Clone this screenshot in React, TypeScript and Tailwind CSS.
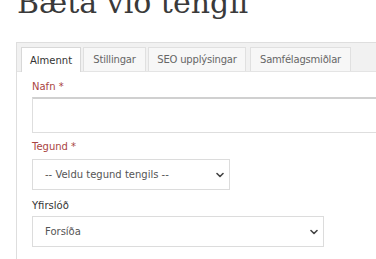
import React from "react";

function Chevron() {
  return (
    <svg width="8" height="6" viewBox="0 0 8 6" className="shrink-0">
      <path d="M1 1.5 L4 4.5 L7 1.5" fill="none" stroke="#444" strokeWidth="1.6" strokeLinecap="round" strokeLinejoin="round" />
    </svg>
  );
}

function Select({ text, width }: { text: string; width: string }) {
  return (
    <div className={`${width} h-[31px] border border-[#dcdcdc] bg-white flex items-center justify-between pl-[12px] pr-[5px] text-[10px] text-[#555]`}>
      <span>{text}</span>
      <Chevron />
    </div>
  );
}

export default function App() {
  const tabs = [
    { t: "Almennt", w: "w-[60px]" },
    { t: "Stillingar", w: "w-[63px]" },
    { t: "SEO upplýsingar", w: "w-[98px]" },
    { t: "Samfélagsmiðlar", w: "w-[101px] ml-[2px]" },
  ];
  return (
    <div className="w-[376px] h-[259px] overflow-hidden bg-white" style={{ fontFamily: '"DejaVu Sans", Verdana, sans-serif' }}>
      <div
        className="pl-[17px] -mt-[12px] text-[30px] leading-[30px] text-[#3a3a3a] whitespace-nowrap"
        style={{ fontFamily: '"DejaVu Serif", Georgia, serif' }}
      >
        Bæta við tengil
      </div>
      <div className="ml-[16px] mt-[24px] w-[420px] h-[300px] border border-[#dedede]">
        <div className="h-[29px] bg-[#f1f1f1] flex items-end pl-[4px] gap-[2px] border-b border-[#e4e4e4]">
          {tabs.map((tab, i) => (
            <div
              key={tab.t}
              className={`${tab.w} flex items-center justify-center border border-b-0 text-[10px] whitespace-nowrap ${
                i === 0
                  ? "bg-white border-[#d8d8d8] text-[#333] -mb-px h-[25px]"
                  : "bg-[#f7f7f7] border-[#e0e0e0] text-[#666] h-[24px] tracking-[-0.2px]"
              }`}
            >
              {tab.t}
            </div>
          ))}
        </div>
        <div className="pl-[15px] pt-[8px]">
          <div className="text-[10px] leading-[14px] text-[#a94442]">Nafn *</div>
          <div className="mt-[3px] w-[400px] h-[36px] border border-[#dedede] border-t-[#d0d0d0] border-t-2 bg-white"></div>
          <div className="mt-[7px] text-[10px] leading-[14px] text-[#a94442]">Tegund *</div>
          <div className="mt-[5px]">
            <Select text="-- Veldu tegund tengils --" width="w-[198px]" />
          </div>
          <div className="mt-[9px] text-[10px] leading-[14px] text-[#333]">Yfirslóð</div>
          <div className="mt-[3px]">
            <Select text="Forsíða" width="w-[292px]" />
          </div>
        </div>
      </div>
    </div>
  );
}
